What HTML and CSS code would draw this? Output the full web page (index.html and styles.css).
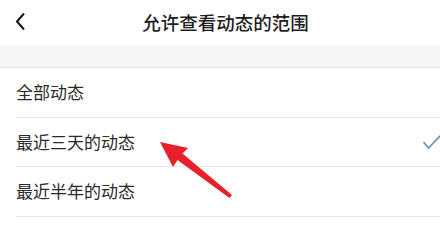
FILE: index.html
```html
<!DOCTYPE html>
<html lang="zh-CN">
<head>
<meta charset="utf-8">
<link rel="stylesheet" href="styles.css">
</head>
<body>
<div class="page">
  <header class="header">
    <svg class="back" width="12" height="20" viewBox="0 0 12 20"><path d="M9 1.5 L2 9.5 L9 17.5" fill="none" stroke="#111" stroke-width="2"/></svg>
    <h1 class="title">允许查看动态的范围</h1>
  </header>
  <div class="band"></div>
  <ul class="list">
    <li class="item"><span>全部动态</span></li>
    <li class="item"><span>最近三天的动态</span>
      <svg class="check" width="17" height="16" viewBox="0 0 17 16"><path d="M0.5 7 L5.5 13 L17.5 0.5" fill="none" stroke="#6a90b2" stroke-width="1.6"/></svg>
    </li>
    <li class="item"><span>最近半年的动态</span></li>
  </ul>
  <svg class="arrow" width="440" height="227" viewBox="0 0 440 227"><polygon points="160,142 188,148 182.5,153.5 232,195 229.5,198 177.5,160 173,167" fill="#e8202a"/></svg>
</div>
</body>
</html>
```

FILE: styles.css
```css
html, body {
  margin: 0;
  padding: 0;
  background: #fff;
}
.page {
  position: relative;
  width: 440px;
  height: 227px;
  overflow: hidden;
  font-family: "Noto Sans CJK SC", "Noto Sans", sans-serif;
}
.header {
  height: 45px;
  display: flex;
  align-items: center;
  justify-content: center;
  padding-left: 11px;
  position: relative;
}
.back {
  position: absolute;
  left: 15px;
  top: 12px;
}
.title {
  margin: 0;
  font-size: 18.5px;
  font-weight: 500;
  color: #1e1e1e;
  line-height: 45px;
}
.band {
  height: 22px;
  background: #f6f6f7;
  border-bottom: 1px solid #e6e6e8;
}
.list {
  list-style: none;
  margin: 0;
  padding: 0;
}
.item {
  margin-left: 16px;
  height: 48.5px;
  border-bottom: 1px solid #e8e8e8;
  display: flex;
  align-items: center;
  justify-content: space-between;
  font-size: 17px;
  color: #2a2a2a;
}
.item span {
  line-height: 48px;
}
.check {
  margin-top: 2px;
}
.arrow {
  position: absolute;
  left: 0;
  top: 0;
}
```
